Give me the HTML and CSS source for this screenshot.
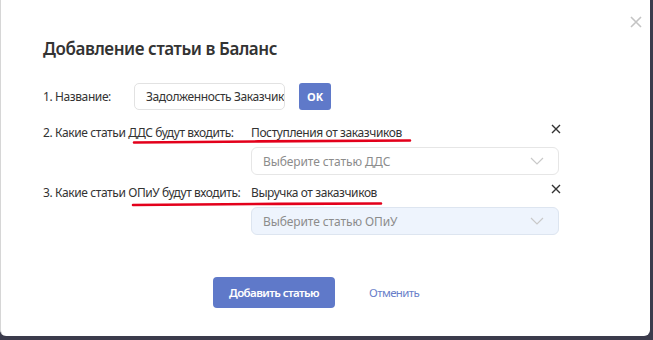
FILE: index.html
```html
<!DOCTYPE html>
<html>
<head>
	<title>Добавление статьи в Баланс</title>
	<link rel="stylesheet" href="styles.css">
</head>
<body>
	<div class="modal">
		<button class="close" aria-label="Закрыть">
			<svg width="12" height="12" viewBox="0 0 12 12"><path d="M1 1L11 11M11 1L1 11" stroke="#c4c4c4" stroke-width="1.6" fill="none"/></svg>
		</button>

		<h2 class="title">Добавление статьи в Баланс</h2>

		<div class="name-row">
			<span class="label">1. Название:</span>
			<div class="input">Задолженность Заказчиков</div>
			<button class="ok">OK</button>
		</div>

		<div class="group">
			<div class="group-head">
				<span class="label">2. Какие статьи ДДС будут входить:</span>
				<span class="value">Поступления от заказчиков</span>
				<svg class="remove" width="10" height="10" viewBox="0 0 10 10"><path d="M1 1L9 9M9 1L1 9" stroke="#333" stroke-width="1.4" fill="none"/></svg>
			</div>
			<div class="select">
				<span>Выберите статью ДДС</span>
				<svg width="14" height="8" viewBox="0 0 14 8"><path d="M1 1L7 7L13 1" stroke="#c9c9c9" stroke-width="1.2" fill="none"/></svg>
			</div>
		</div>

		<div class="group">
			<div class="group-head">
				<span class="label">3. Какие статьи ОПиУ будут входить:</span>
				<span class="value">Выручка от заказчиков</span>
				<svg class="remove" width="10" height="10" viewBox="0 0 10 10"><path d="M1 1L9 9M9 1L1 9" stroke="#333" stroke-width="1.4" fill="none"/></svg>
			</div>
			<div class="select select-active">
				<span>Выберите статью ОПиУ</span>
				<svg width="14" height="8" viewBox="0 0 14 8"><path d="M1 1L7 7L13 1" stroke="#c9c9c9" stroke-width="1.2" fill="none"/></svg>
			</div>
		</div>

		<div class="actions">
			<button class="primary">Добавить статью</button>
			<button class="link">Отменить</button>
		</div>
	</div>

	<!-- red marker underlines drawn over the text -->
	<svg class="marks" width="653" height="340" viewBox="0 0 653 340">
		<path d="M134 142.5C220 141.5 330 141 410 140.5" stroke="#e3001b" stroke-width="2.6" stroke-linecap="round" fill="none"/>
		<path d="M133 205C210 204 300 203.8 381 203.5" stroke="#e3001b" stroke-width="2.6" stroke-linecap="round" fill="none"/>
	</svg>
</body>
</html>
```

FILE: styles.css
```css
body{
	margin: 0;
	background: #3b3b4c;
	font-family: "Noto Sans", "Open Sans", sans-serif;
	color: #333;
	overflow: hidden;
	width: 653px;
	height: 340px;
	position: relative;
}

.modal{
	position: relative;
	box-sizing: border-box;
	width: 650px;
	height: 344px;
	margin-top: -8px;
	background: #fff;
	border-left: 1px solid #d6d6d6;
	border-radius: 6px;
	padding: 46px 0 0 42px;
}

.close{
	position: absolute;
	top: 24px;
	right: 8px;
	border: 0;
	background: none;
	padding: 0;
	display: flex;
}

.title{
	margin: 0;
	font-size: 17px;
	font-weight: 600;
	letter-spacing: -0.42px;
	line-height: 22px;
	color: #333;
}

.label,
.value{
	font-size: 12px;
	letter-spacing: -0.4px;
	color: #333;
	white-space: nowrap;
}

.name-row{
	display: flex;
	align-items: center;
	margin-top: 23px;
	height: 27px;
}

.name-row .label{
	width: 91px;
}

.input{
	box-sizing: border-box;
	width: 151px;
	height: 27px;
	border: 1px solid #e2e2e2;
	border-radius: 5px;
	padding: 0 0 0 11px;
	font-size: 12px;
	letter-spacing: -0.4px;
	line-height: 25px;
	white-space: nowrap;
	overflow: hidden;
}

.ok{
	margin-left: 14px;
	width: 32px;
	height: 27px;
	border: 0;
	border-radius: 3px;
	background: #5f79c9;
	color: #fff;
	font-family: inherit;
	font-weight: 700;
	font-size: 11px;
	padding: 0;
}

.group{
	margin-top: 12px;
}

.group + .group{
	margin-top: 7px;
}

.group-head{
	display: grid;
	grid-template-columns: 208px 1fr 12px;
	align-items: center;
	height: 20px;
	width: 520px;
}

.remove{
	margin-top: -6px;
}

.select{
	box-sizing: border-box;
	margin: 5px 0 0 208px;
	width: 308px;
	height: 28px;
	border: 1px solid #e6e6e6;
	border-radius: 6px;
	display: flex;
	align-items: center;
	justify-content: space-between;
	padding: 0 14px 0 11px;
	font-size: 12px;
	letter-spacing: -0.1px;
	color: #8c8c8c;
}

.select-active{
	background: #eef4fd;
	border-color: #dde5f0;
}

.actions{
	display: flex;
	align-items: center;
	margin: 42px 0 0 170px;
}

.primary{
	width: 122px;
	height: 31px;
	border: 0;
	border-radius: 4px;
	background: #5f79c9;
	color: #fff;
	font-family: inherit;
	font-size: 11.5px;
	font-weight: 600;
	letter-spacing: -0.6px;
}

.link{
	margin-left: 34px;
	border: 0;
	background: none;
	padding: 0;
	font-family: inherit;
	font-size: 11.5px;
	letter-spacing: -0.6px;
	color: #6a7fca;
}

.marks{
	position: absolute;
	left: 0;
	top: 0;
	pointer-events: none;
}
```
